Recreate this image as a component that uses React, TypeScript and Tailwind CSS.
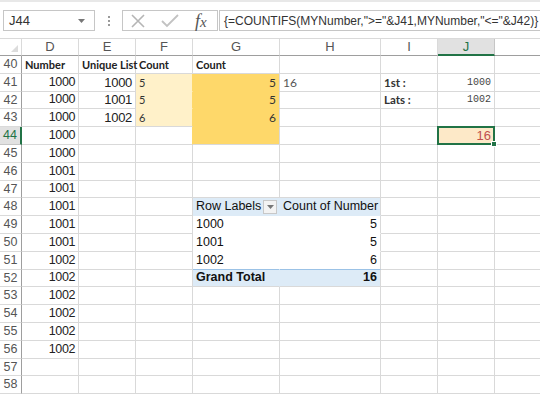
import React from "react";

const COLS = [22, 57, 57, 57, 87, 101, 57, 57, 60];
const LETTERS = ["", "D", "E", "F", "G", "H", "I", "J", ""];

type Cell = {
  text?: React.ReactNode;
  align?: "l" | "r";
  cls?: string;
  bg?: string;
  br?: string;
  bb?: string;
  extra?: React.ReactNode;
};

const ARIAL = "font-['Liberation_Sans',Arial,sans-serif]";
const CAL = "font-['Lato','Open_Sans',sans-serif]";
const MONO = "font-['Liberation_Mono','DejaVu_Sans_Mono',monospace]";

const dVals: Record<number, string> = {
  41: "1000", 42: "1000", 43: "1000", 44: "1000", 45: "1000",
  46: "1001", 47: "1001", 48: "1001", 49: "1001", 50: "1001",
  51: "1002", 52: "1002", 53: "1002", 54: "1002", 55: "1002", 56: "1002",
};

function getCell(row: number, c: number): Cell {
  const num = `${ARIAL} text-[12.5px] tracking-[-0.4px] text-[#222]`;
  const bold = `${CAL} font-bold text-[11px] text-[#222]`;
  if (row === 40) {
    if (c === 1) return { text: "Number", align: "l", cls: bold };
    if (c === 2) return { text: "Unique List", align: "l", cls: bold };
    if (c === 3) return { text: "Count", align: "l", cls: bold };
    if (c === 4) return { text: "Count", align: "l", cls: bold };
  }
  if (c === 1 && dVals[row]) return { text: dVals[row], align: "r", cls: num };
  if (c === 2 && row >= 41 && row <= 43)
    return { text: String(999 + row - 40), align: "r", cls: `${ARIAL} text-[13px] tracking-[-0.3px] text-[#222]` };
  if (c === 3 && row >= 41 && row <= 43)
    return {
      text: row === 43 ? "6" : "5",
      align: "l",
      cls: `${CAL} text-[11px] text-[#333]`,
      bg: "bg-[#fff1c9]",
      br: "border-r-[#fed86a]",
      bb: row === 43 ? "border-b-[#d9d9d9]" : "border-b-[#fff1c9]",
    };
  if (c === 3 && row === 44) return { br: "border-r-[#fed86a]" };
  if (c === 4 && row >= 41 && row <= 44)
    return {
      text: row === 44 ? "" : row === 43 ? "6" : "5",
      align: "r",
      cls: `${CAL} text-[12px] text-[#333]`,
      bg: "bg-[#fed86a]",
      bb: row === 44 ? "border-b-[#d9d9d9]" : "border-b-[#fed86a]",
    };
  if (c === 5 && row === 41)
    return { text: "16", align: "l", cls: `${CAL} text-[12px] text-[#555]` };
  if (c === 6 && row === 41)
    return { text: "1st :", align: "l", cls: `${CAL} font-bold text-[11.5px] text-[#333]` };
  if (c === 6 && row === 42)
    return { text: "Lats :", align: "l", cls: `${CAL} font-bold text-[11.5px] text-[#333]` };
  if (c === 7 && row === 41)
    return { text: "1000", align: "r", cls: `${MONO} text-[10px] text-[#444]` };
  if (c === 7 && row === 42)
    return { text: "1002", align: "r", cls: `${MONO} text-[10px] text-[#444]` };
  if (c === 7 && row === 44)
    return {
      text: "16",
      align: "r",
      cls: `${ARIAL} text-[13px] text-[#c0504d]`,
      bg: "bg-[#fde9c8]",
      extra: (
        <>
          <div className="pointer-events-none absolute -left-[1px] -top-[1px] right-[-1px] bottom-[-1px] z-20 border-2 border-[#217346]" />
          <div className="absolute -bottom-[3px] -right-[3px] z-20 h-[6px] w-[6px] border border-white bg-[#217346]" />
        </>
      ),
    };
  const pv = `${ARIAL} text-[12.5px] text-[#111]`;
  if (row === 48 && c === 4)
    return {
      text: "Row Labels",
      align: "l",
      cls: pv,
      bg: "bg-[#ddebf7]",
      br: "border-r-[#ddebf7]",
      bb: "border-b-[#ddebf7]",
      extra: (
        <div className="absolute right-[2px] top-[2px] flex h-[14px] w-[14px] items-center justify-center border border-[#c8c8c8] bg-[#f3f3f3]">
          <svg width="7" height="4" viewBox="0 0 7 4">
            <path d="M0 0 L7 0 L3.5 4 Z" fill="#777" />
          </svg>
        </div>
      ),
    };
  if (row === 48 && c === 5)
    return { text: "Count of Number", align: "l", cls: pv, bg: "bg-[#ddebf7]", bb: "border-b-[#ddebf7]" };
  if (row >= 49 && row <= 51 && c === 4)
    return {
      text: String(1000 + row - 49),
      align: "l",
      cls: pv,
      bg: "bg-white",
      br: "border-r-white",
      bb: row === 51 ? "border-b-[#9bc2e6]" : "border-b-white",
    };
  if (row >= 49 && row <= 51 && c === 5)
    return {
      text: row === 51 ? "6" : "5",
      align: "r",
      cls: pv,
      bg: "bg-white",
      bb: row === 51 ? "border-b-[#9bc2e6]" : "border-b-white",
    };
  if (row === 52 && c === 4)
    return {
      text: "Grand Total",
      align: "l",
      cls: `${pv} font-bold`,
      bg: "bg-[#ddebf7]",
      br: "border-r-[#ddebf7]",
    };
  if (row === 52 && c === 5)
    return { text: "16", align: "r", cls: `${pv} font-bold`, bg: "bg-[#ddebf7]" };
  return {};
}

function GridRow({ row }: { row: number }) {
  const sel = row === 44;
  return (
    <div className="flex h-[17.8px]">
      <div
        className={`flex h-full shrink-0 items-center justify-center border-b ${
          sel
            ? "border-b-[#c6c6c6] border-r-2 border-r-[#217346] bg-[#e1e1e1] text-[#217346]"
            : "border-b-[#dadada] border-r border-r-[#9e9e9e] bg-white text-[#555]"
        } ${ARIAL} text-[12.5px]`}
        style={{ width: COLS[0] }}
      >
        {row}
      </div>
      {COLS.slice(1).map((w, i) => {
        const c = i + 1;
        const cell = getCell(row, c);
        return (
          <div
            key={c}
            className={`relative flex h-full shrink-0 items-end overflow-visible border-b border-r pb-[1px] ${
              cell.bg ?? "bg-white"
            } ${cell.br ?? "border-r-[#d9d9d9]"} ${cell.bb ?? "border-b-[#d9d9d9]"} ${
              cell.align === "r" ? "justify-end pr-[3px]" : "justify-start pl-[3px]"
            }`}
            style={{ width: w }}
          >
            {cell.text !== undefined && cell.text !== "" && (
              <span className={`relative z-10 whitespace-nowrap leading-[15px] ${cell.cls ?? ""}`}>{cell.text}</span>
            )}
            {cell.extra}
          </div>
        );
      })}
    </div>
  );
}

export default function App() {
  const rows: number[] = [];
  for (let r = 40; r <= 58; r++) rows.push(r);
  return (
    <div className="h-[398px] w-[540px] overflow-hidden bg-white">
      <div className="flex h-[38px] items-start border-t-2 border-t-[#e8e8e8] bg-white pl-[3px] pt-[8px]">
        <div className="flex h-[21px] w-[92px] shrink-0 items-center justify-between border border-[#c6c6c6] bg-white pl-[5px] pr-[9px]">
          <span className={`${ARIAL} text-[13px] text-[#333]`}>J44</span>
          <svg width="7" height="4" viewBox="0 0 7 4">
            <path d="M0 0 L7 0 L3.5 4 Z" fill="#777" />
          </svg>
        </div>
        <div className="flex h-[21px] w-[27px] shrink-0 flex-col items-center justify-center gap-[2px]">
          <div className="h-[2px] w-[2px] bg-[#9a9a9a]" />
          <div className="h-[2px] w-[2px] bg-[#9a9a9a]" />
          <div className="h-[2px] w-[2px] bg-[#9a9a9a]" />
        </div>
        <div className="flex h-[21px] w-[96px] shrink-0 items-center border border-[#c6c6c6] bg-white">
          <svg width="14" height="14" viewBox="0 0 14 14" className="ml-[8px]">
            <path d="M1 1 L13 13 M13 1 L1 13" stroke="#b5b5b5" strokeWidth="1.6" />
          </svg>
          <svg width="18" height="14" viewBox="0 0 18 14" className="ml-[16px]">
            <path d="M1 7 L6 12 L17 1" stroke="#c2c2c2" strokeWidth="1.8" fill="none" />
          </svg>
          <span className="ml-[16px] font-['Liberation_Serif',serif] text-[18px] italic leading-none text-[#555]">
            f<span className="text-[15px]">x</span>
          </span>
        </div>
        <div className="ml-[1px] flex h-[21px] min-w-0 flex-1 items-center overflow-hidden border border-r-0 border-[#c6c6c6] bg-white pl-[4px]">
          <span className={`${ARIAL} whitespace-nowrap text-[12px] text-[#333]`}>
            {'{=COUNTIFS(MYNumber,">="&J41,MYNumber,"<="&J42)}'}
          </span>
        </div>
      </div>
      <div className="flex h-[18px] border-t border-t-[#dadada]">
        {COLS.map((w, i) => {
          const selected = LETTERS[i] === "J";
          if (i === 0)
            return (
              <div
                key={i}
                className="relative h-full shrink-0 border-b border-r border-b-[#9e9e9e] border-r-[#dadada] bg-white"
                style={{ width: w }}
              >
                <svg width="7" height="7" viewBox="0 0 7 7" className="absolute bottom-[3px] right-[3px]">
                  <path d="M7 0 L7 7 L0 7 Z" fill="#dcdcdc" />
                </svg>
              </div>
            );
          return (
            <div
              key={i}
              className={`flex h-full shrink-0 items-center justify-center border-r ${
                selected
                  ? "border-b-2 border-b-[#217346] border-r-[#c6c6c6] bg-[#e1e1e1] text-[#217346]"
                  : "border-b border-b-[#9e9e9e] border-r-[#dadada] bg-white text-[#555]"
              } ${ARIAL} text-[13px]`}
              style={{ width: w }}
            >
              {LETTERS[i]}
            </div>
          );
        })}
      </div>
      {rows.map((r) => (
        <GridRow key={r} row={r} />
      ))}
    </div>
  );
}
